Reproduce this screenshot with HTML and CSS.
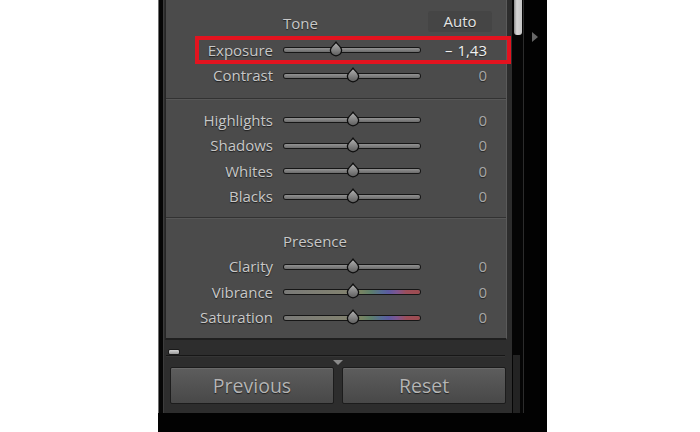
FILE: index.html
```html
<!DOCTYPE html>
<html>
<head>
<meta charset="utf-8">
<link rel="stylesheet" href="styles.css">
</head>
<body>
<svg class="defs" width="0" height="0" aria-hidden="true">
  <defs>
    <linearGradient id="tg" x1="0" y1="0" x2="0" y2="1">
      <stop offset="0" stop-color="#b4b4b4"/>
      <stop offset="1" stop-color="#5c5c5c"/>
    </linearGradient>
  </defs>
</svg>
<div class="frame">
  <div class="frame-main">
    <div class="gutter"></div>
    <div class="main">
      <div class="panel">
        <section class="sec sec-tone">
          <div class="head head-tone"><span class="title">Tone</span><span class="auto">Auto</span></div>
          <div class="row"><span class="label">Exposure</span><span class="track"><svg class="thumb" style="left:45px" width="14" height="16" viewBox="0 0 14 16"><path d="M7 1.2 C8.5 3.5 12.6 6 12.6 9.2 A5.6 5.6 0 0 1 1.4 9.2 C1.4 6 5.5 3.5 7 1.2 Z"/></svg></span><span class="value value-active">–&nbsp;1,43</span></div>
          <div class="row"><span class="label">Contrast</span><span class="track"><svg class="thumb" style="left:62px" width="14" height="16" viewBox="0 0 14 16"><path d="M7 1.2 C8.5 3.5 12.6 6 12.6 9.2 A5.6 5.6 0 0 1 1.4 9.2 C1.4 6 5.5 3.5 7 1.2 Z"/></svg></span><span class="value">0</span></div>
        </section>
        <section class="sec sec-mid">
          <div class="row"><span class="label">Highlights</span><span class="track"><svg class="thumb" style="left:62px" width="14" height="16" viewBox="0 0 14 16"><path d="M7 1.2 C8.5 3.5 12.6 6 12.6 9.2 A5.6 5.6 0 0 1 1.4 9.2 C1.4 6 5.5 3.5 7 1.2 Z"/></svg></span><span class="value">0</span></div>
          <div class="row"><span class="label">Shadows</span><span class="track"><svg class="thumb" style="left:62px" width="14" height="16" viewBox="0 0 14 16"><path d="M7 1.2 C8.5 3.5 12.6 6 12.6 9.2 A5.6 5.6 0 0 1 1.4 9.2 C1.4 6 5.5 3.5 7 1.2 Z"/></svg></span><span class="value">0</span></div>
          <div class="row"><span class="label">Whites</span><span class="track"><svg class="thumb" style="left:62px" width="14" height="16" viewBox="0 0 14 16"><path d="M7 1.2 C8.5 3.5 12.6 6 12.6 9.2 A5.6 5.6 0 0 1 1.4 9.2 C1.4 6 5.5 3.5 7 1.2 Z"/></svg></span><span class="value">0</span></div>
          <div class="row"><span class="label">Blacks</span><span class="track"><svg class="thumb" style="left:62px" width="14" height="16" viewBox="0 0 14 16"><path d="M7 1.2 C8.5 3.5 12.6 6 12.6 9.2 A5.6 5.6 0 0 1 1.4 9.2 C1.4 6 5.5 3.5 7 1.2 Z"/></svg></span><span class="value">0</span></div>
        </section>
        <section class="sec sec-presence">
          <div class="head head-presence"><span class="title">Presence</span></div>
          <div class="row"><span class="label">Clarity</span><span class="track"><svg class="thumb" style="left:62px" width="14" height="16" viewBox="0 0 14 16"><path d="M7 1.2 C8.5 3.5 12.6 6 12.6 9.2 A5.6 5.6 0 0 1 1.4 9.2 C1.4 6 5.5 3.5 7 1.2 Z"/></svg></span><span class="value">0</span></div>
          <div class="row"><span class="label">Vibrance</span><span class="track track-color"><svg class="thumb" style="left:62px" width="14" height="16" viewBox="0 0 14 16"><path d="M7 1.2 C8.5 3.5 12.6 6 12.6 9.2 A5.6 5.6 0 0 1 1.4 9.2 C1.4 6 5.5 3.5 7 1.2 Z"/></svg></span><span class="value">0</span></div>
          <div class="row"><span class="label">Saturation</span><span class="track track-color"><svg class="thumb" style="left:62px" width="14" height="16" viewBox="0 0 14 16"><path d="M7 1.2 C8.5 3.5 12.6 6 12.6 9.2 A5.6 5.6 0 0 1 1.4 9.2 C1.4 6 5.5 3.5 7 1.2 Z"/></svg></span><span class="value">0</span></div>
        </section>
      </div>
      <div class="foot">
        <div class="strip"><span class="handle"></span></div>
        <div class="rule"></div>
        <div class="btn-area">
          <span class="drop"></span>
          <div class="btns">
            <button class="btn">Previous</button>
            <button class="btn">Reset</button>
          </div>
        </div>
      </div>
    </div>
    <div class="scroll">
      <span class="scroll-thumb"></span>
      <span class="scroll-fill"></span>
      <span class="scroll-track"></span>
    </div>
    <div class="sep"></div>
    <div class="rail"><span class="rail-arrow"></span></div>
  </div>
  <div class="frame-bottom"></div>
  <div class="highlight"></div>
</div>
</body>
</html>
```

FILE: styles.css
```css
* { box-sizing: border-box; }
html, body { margin: 0; padding: 0; background: #ffffff; }
body {
  width: 700px;
  height: 432px;
  overflow: hidden;
  font-family: "Open Sans", "DejaVu Sans", sans-serif;
}
.defs { position: absolute; width: 0; height: 0; }

.frame {
  position: relative;
  margin-left: 158px;
  width: 389px;
  height: 432px;
  background: #030303;
  display: flex;
  flex-direction: column;
}
.frame-main { display: flex; height: 413px; }
.frame-bottom { height: 19px; background: #020202; }

.gutter {
  width: 5px;
  border-left: 1px solid #6e6e6e;
  background: #060606;
}

.main {
  width: 349px;
  background: #2d2d2d;
  border-left: 1px solid #3c3c3c;
  display: flex;
  flex-direction: column;
}

.panel {
  margin-left: 1px;
  width: 342px;
  height: 340px;
  background: #4b4b4b;
  border-left: 1px solid #262626;
  border-right: 1px solid #5a5a5a;
  border-bottom: 2px solid #1f1f1f;
  display: flex;
  flex-direction: column;
}

.sec { display: flex; flex-direction: column; }
.sec-tone { height: 99px; padding: 8px 0 10px; border-bottom: 1px solid #323232; }
.sec-mid { height: 119px; padding: 7px 0 8px; border-top: 1px solid #575757; border-bottom: 1px solid #323232; }
.sec-presence { height: 120px; padding: 9px 0 8px; border-top: 1px solid #575757; }

.head { display: flex; align-items: center; }
.head-tone { height: 29px; }
.head-presence { height: 25.5px; }
.title {
  padding-left: 117px;
  font-size: 15px;
  color: #c8c8c8;
  text-shadow: 0 1px 1px rgba(0,0,0,0.55);
}
.auto {
  margin-left: auto;
  margin-right: 14px;
  width: 64px;
  height: 21px;
  line-height: 21px;
  margin-top: -2px;
  text-align: center;
  font-size: 15px;
  color: #e4e4e4;
  background: #454545;
  border-radius: 3px;
  text-shadow: 0 1px 1px rgba(0,0,0,0.6);
}

.row {
  display: flex;
  align-items: center;
  height: 25.5px;
  font-size: 15px;
}
.label {
  width: 107px;
  text-align: right;
  color: #c8c8c8;
  text-shadow: 0 1px 1px rgba(0,0,0,0.6);
  white-space: nowrap;
}
.track {
  position: relative;
  margin-left: 11px;
  width: 136px;
  height: 4px;
  margin-top: 1px;
  border-radius: 2px;
  background: linear-gradient(#929292, #6c6c6c);
  box-shadow: 0 0 0 1px #161616;
}
.track-color {
  background: linear-gradient(to right, #7a7a78 0%, #82826f 48%, #778463 57%, #5d7f6c 64%, #566a96 72%, #5d5aa0 77%, #7e5690 83%, #9c4e5a 90%, #9e4c50 100%);
}
.thumb {
  position: absolute;
  top: -7px;
  width: 14px;
  height: 16px;
  overflow: visible;
}
.thumb path {
  fill: url(#tg);
  stroke: #0e0e0e;
  stroke-width: 1.3;
}
.value {
  flex: 1;
  text-align: right;
  padding-right: 19px;
  color: #a8a8a8;
  text-shadow: 0 1px 1px rgba(0,0,0,0.5);
  white-space: nowrap;
}
.value-active { color: #f0f0f0; word-spacing: 1px; }

.foot { display: flex; flex-direction: column; height: 73px; }
.strip { height: 15px; padding-left: 4px; padding-top: 9px; }
.handle {
  display: block;
  width: 12px;
  height: 6px;
  border-radius: 2px;
  background: linear-gradient(#d4d4d4, #9a9a9a);
  border: 1px solid #1a1a1a;
}
.rule {
  height: 2px;
  margin: 0 7px 0 2px;
  border-top: 1px solid #171717;
  border-bottom: 1px solid #353535;
}
.btn-area { display: flex; flex-direction: column; padding-top: 3px; }
.drop {
  display: block;
  margin-left: 169px;
  width: 0;
  height: 0;
  border-left: 5px solid transparent;
  border-right: 5px solid transparent;
  border-top: 5px solid #8a8a8a;
}
.btns {
  display: flex;
  gap: 8px;
  padding-left: 6px;
  margin-top: 2px;
}
.btn {
  width: 164px;
  height: 37px;
  padding: 0;
  border: 1px solid #1c1c1c;
  border-radius: 2px;
  background: linear-gradient(#5d5d5d, #484848);
  box-shadow: inset 0 1px 0 #6a6a6a;
  font-family: "Open Sans", "DejaVu Sans", sans-serif;
  font-size: 19.5px;
  color: #b4b4b4;
  text-shadow: 0 1px 1px rgba(0,0,0,0.6);
}

.scroll {
  width: 11px;
  background: #050505;
  display: flex;
  flex-direction: column;
}
.scroll-thumb {
  display: block;
  margin-left: 2px;
  width: 8px;
  height: 35px;
  border-radius: 0 0 3px 3px;
  background: linear-gradient(to right, #8c8c8c, #d6d6d6 35%, #c6c6c6);
}
.scroll-fill { flex: 1; }
.scroll-track {
  display: block;
  margin-left: 1px;
  width: 7px;
  height: 58px;
  background: #232323;
}
.sep { width: 1px; background: #2c2c2c; }
.rail { width: 23px; background: #020202; }
.rail-arrow {
  display: block;
  margin-left: 8px;
  margin-top: 32px;
  width: 0;
  height: 0;
  border-top: 5.5px solid transparent;
  border-bottom: 5.5px solid transparent;
  border-left: 6px solid #666666;
}

.highlight {
  position: absolute;
  left: 37px;
  top: 36px;
  width: 316px;
  height: 28px;
  border: 4px solid #e3131f;
}
```
